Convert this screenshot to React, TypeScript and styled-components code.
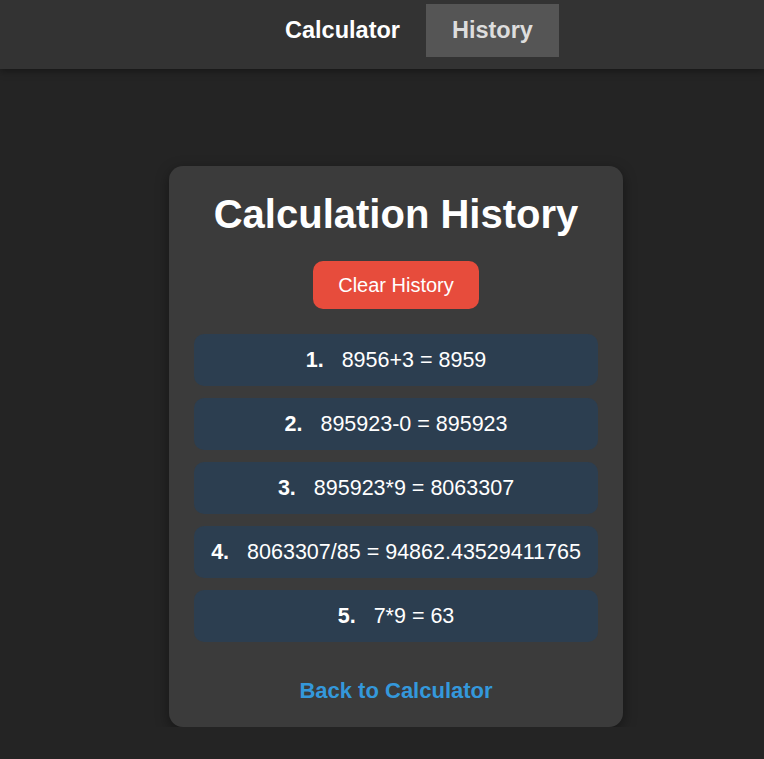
import React from "react";
import styled, { createGlobalStyle } from "styled-components";

const Global = createGlobalStyle`
  body {
    margin: 0;
    background: #242424;
    font-family: "Liberation Sans", Arial, sans-serif;
    color: #fff;
  }
`;

const Nav = styled.nav`
  height: 69px;
  background: #333;
  box-shadow: 0 2px 8px rgba(0, 0, 0, 0.4);
  display: flex;
  justify-content: center;
  align-items: flex-start;
  padding-top: 4px;
  box-sizing: border-box;
  padding-left: 54px;
`;

const NavLink = styled.a<{ $active?: boolean }>`
  font-size: 23.5px;
  font-weight: bold;
  padding: 0 26px;
  height: 53px;
  display: flex;
  align-items: center;
  color: ${(p) => (p.$active ? "#ddd" : "#fff")};
  background: ${(p) => (p.$active ? "#555" : "transparent")};
  cursor: pointer;
`;

const Card = styled.div`
  width: 454px;
  margin: 97px 0 0 calc(50% - 213px);
  background: #3b3b3b;
  border-radius: 14px;
  box-shadow: 0 4px 14px rgba(0, 0, 0, 0.4);
  padding: 24px 25px 24px;
  box-sizing: border-box;
  display: flex;
  flex-direction: column;
  align-items: center;
`;

const Title = styled.h1`
  font-size: 40px;
  margin: 0;
  line-height: 48px;
`;

const ClearButton = styled.button`
  margin-top: 23px;
  background: #e74c3c;
  color: #fff;
  border: none;
  border-radius: 10px;
  font-family: inherit;
  font-size: 20px;
  width: 166px;
  height: 48px;
`;

const List = styled.ol`
  list-style: none;
  margin: 25px 0 0;
  padding: 0;
  width: 100%;
  display: flex;
  flex-direction: column;
  gap: 12px;
`;

const Item = styled.li`
  background: #2c3e50;
  border-radius: 10px;
  height: 52px;
  display: flex;
  align-items: center;
  justify-content: center;
  font-size: 21.5px;
  gap: 18px;
`;

const Num = styled.b``;

const BackLink = styled.a`
  margin-top: 37px;
  color: #3498db;
  font-weight: bold;
  font-size: 22px;
  line-height: 24px;
`;

const history = [
  "8956+3 = 8959",
  "895923-0 = 895923",
  "895923*9 = 8063307",
  "8063307/85 = 94862.43529411765",
  "7*9 = 63",
];

export default function App() {
  return (
    <>
      <Global />
      <Nav>
        <NavLink>Calculator</NavLink>
        <NavLink $active>History</NavLink>
      </Nav>
      <Card>
        <Title>Calculation History</Title>
        <ClearButton>Clear History</ClearButton>
        <List>
          {history.map((h, i) => (
            <Item key={i}>
              <Num>{i + 1}.</Num>
              <span>{h}</span>
            </Item>
          ))}
        </List>
        <BackLink>Back to Calculator</BackLink>
      </Card>
    </>
  );
}
